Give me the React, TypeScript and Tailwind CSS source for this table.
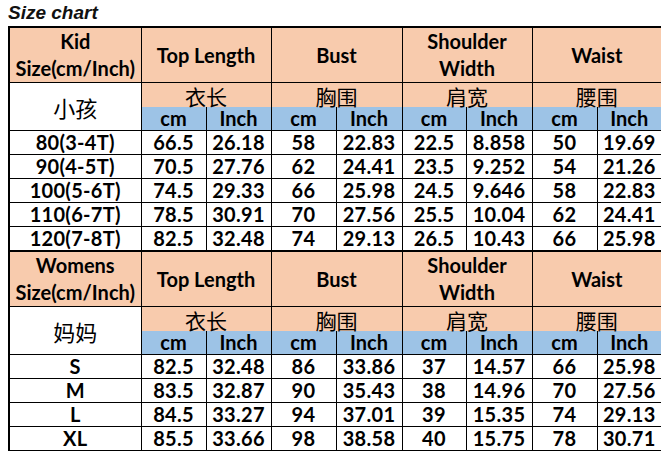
import React from "react";

const cats = [
  ["Top Length"],
  ["Bust"],
  ["Shoulder", "Width"],
  ["Waist"],
];
const zh = ["衣长", "胸围", "肩宽", "腰围"];

const kid = [
  ["80(3-4T)", "66.5", "26.18", "58", "22.83", "22.5", "8.858", "50", "19.69"],
  ["90(4-5T)", "70.5", "27.76", "62", "24.41", "23.5", "9.252", "54", "21.26"],
  ["100(5-6T)", "74.5", "29.33", "66", "25.98", "24.5", "9.646", "58", "22.83"],
  ["110(6-7T)", "78.5", "30.91", "70", "27.56", "25.5", "10.04", "62", "24.41"],
  ["120(7-8T)", "82.5", "32.48", "74", "29.13", "26.5", "10.43", "66", "25.98"],
];
const women = [
  ["S", "82.5", "32.48", "86", "33.86", "37", "14.57", "66", "25.98"],
  ["M", "83.5", "32.87", "90", "35.43", "38", "14.96", "70", "27.56"],
  ["L", "84.5", "33.27", "94", "37.01", "39", "15.35", "74", "29.13"],
  ["XL", "85.5", "33.66", "98", "38.58", "40", "15.75", "78", "30.71"],
];

const widths = [132, 65, 65, 65, 66, 64, 66, 65, 64];
const cjk = { fontFamily: '"Noto Sans CJK SC", sans-serif' };

function Section({ title, zhName, rows, last }: { title: string; zhName: string; rows: string[][]; last?: boolean }) {
  return (
    <>
      <tr className="h-[54px] border-t-2 border-black">
        <td className="bg-[#f8cbad] border-r border-black border-b text-center leading-[27px] align-middle">
          <div>{title}</div>
          <div>Size(cm/Inch)</div>
        </td>
        {cats.map((c, i) => (
          <td
            key={i}
            colSpan={2}
            className={`bg-[#f8cbad] border-black border-b text-center leading-[27px] align-middle ${i < 3 ? "border-r" : ""}`}
          >
            {c.map((l, j) => (
              <div key={j}>{l}</div>
            ))}
          </td>
        ))}
      </tr>
      <tr className="h-[24px]">
        <td rowSpan={2} className="bg-white border-r border-b border-black text-center align-middle font-normal text-[22px] leading-none" style={cjk}>
          {zhName}
        </td>
        {zh.map((z, i) => (
          <td
            key={i}
            colSpan={2}
            className={`bg-[#f8cbad] border-black text-center align-bottom font-normal text-[21px] leading-[22px] ${i < 3 ? "border-r" : ""}`}
            style={cjk}
          >
            {z}
          </td>
        ))}
      </tr>
      <tr className="h-[24px]">
        {zh.map((_, i) => (
          <React.Fragment key={i}>
            <td className="bg-[#9dc3e6] border-r border-b border-black text-center leading-[23px]">cm</td>
            <td className={`bg-[#9dc3e6] border-b border-black text-center leading-[23px] ${i < 3 ? "border-r" : ""}`}>Inch</td>
          </React.Fragment>
        ))}
      </tr>
      {rows.map((r, i) => (
        <tr key={i} className={`h-[24px] ${last && i === rows.length - 1 ? "border-b-2 border-black" : ""}`}>
          {r.map((v, j) => (
            <td key={j} className={`border-b border-black text-center leading-[23px] tracking-[0.3px] ${j < 8 ? "border-r" : ""}`}>
              {v}
            </td>
          ))}
        </tr>
      ))}
    </>
  );
}

export default function App() {
  return (
    <div className="w-[668px] h-[451px] bg-white overflow-hidden">
      <div className="pl-[8px] pt-[2px] h-[26px] text-[19px] font-bold italic leading-[22px] text-[#111]" style={{ fontFamily: '"Liberation Sans", Arial, sans-serif' }}>
        Size chart
      </div>
      <table
        className="ml-[8px] border-collapse table-fixed border-l-2 border-black text-[20px] font-bold text-black"
        style={{ fontFamily: 'Lato, "Liberation Sans", sans-serif', width: 652 }}
      >
        <colgroup>
          {widths.map((w, i) => (
            <col key={i} style={{ width: w }} />
          ))}
        </colgroup>
        <tbody>
          <Section title="Kid" zhName="小孩" rows={kid} />
          <Section title="Womens" zhName="妈妈" rows={women} last />
        </tbody>
      </table>
    </div>
  );
}
